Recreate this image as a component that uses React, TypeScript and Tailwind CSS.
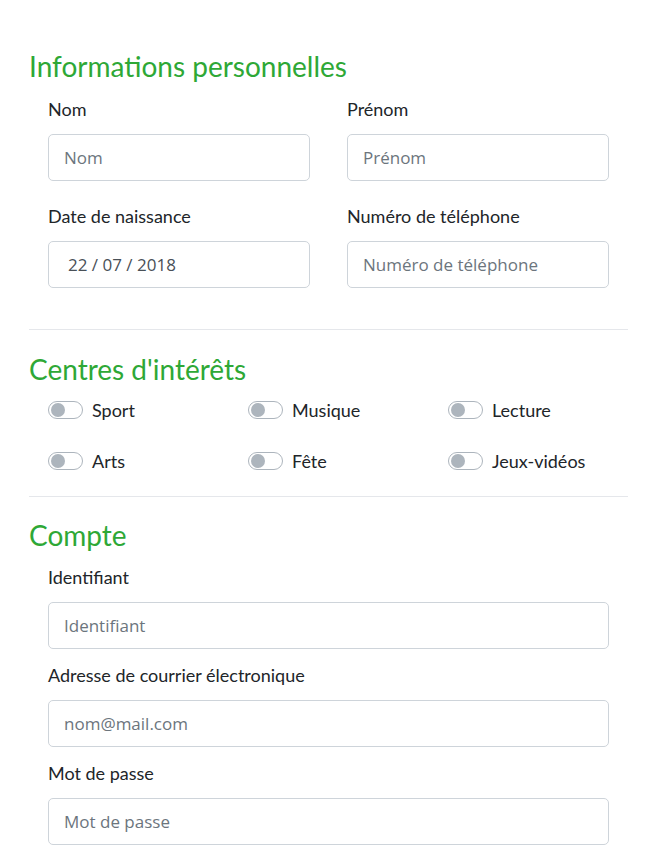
const HEAD = "text-[28px] leading-[32px] text-[#2ea836] font-['Lato','Noto_Sans',sans-serif]";
const LABEL = "block text-[18px] leading-[22px] text-[#212529] font-['Lato','Noto_Sans',sans-serif]";
const INPUT =
  "block w-full h-[47px] rounded-[5px] border border-[#ced4da] bg-white px-[15px] text-[17px] text-[#495057] placeholder:text-[#6c757d] font-['Open_Sans','Noto_Sans',sans-serif] outline-none";

function Field({ label, placeholder, value }: { label: string; placeholder: string; value?: string }) {
  return (
    <div className="flex flex-col gap-[14px]">
      <label className={LABEL}>{label}</label>
      {value ? (
        <div className={`${INPUT} flex items-center pl-[19px]`}>{value}</div>
      ) : (
        <input className={INPUT} placeholder={placeholder} />
      )}
    </div>
  );
}

function Toggle({ label }: { label: string }) {
  return (
    <div className="flex items-center gap-[9px]">
      <span className="flex h-[18px] w-[35px] items-center rounded-full border border-[#adb5bd] bg-white px-[2px]">
        <span className="h-[14px] w-[14px] rounded-full bg-[#adb5bd]" />
      </span>
      <span className={LABEL}>{label}</span>
    </div>
  );
}

export default function App() {
  const interests = ["Sport", "Musique", "Lecture", "Arts", "Fête", "Jeux-vidéos"];
  return (
    <div className="min-h-screen bg-white px-[29px] pt-[50px] pb-[20px]">
      <div className="w-[599px]">
        <h2 className={HEAD}>Informations personnelles</h2>
        <div className="mt-[16px] px-[19px] grid grid-cols-2 gap-x-[37px] gap-y-[24px]">
          <Field label="Nom" placeholder="Nom" />
          <Field label="Prénom" placeholder="Prénom" />
          <Field label="Date de naissance" placeholder="" value="22 / 07 / 2018" />
          <Field label="Numéro de téléphone" placeholder="Numéro de téléphone" />
        </div>
        <hr className="mt-[41px] border-t border-[#e5e7eb]" />

        <h2 className={`${HEAD} mt-[23px]`}>Centres d'intérêts</h2>
        <div className="mt-[14px] pl-[19px] grid grid-cols-[200px_200px_1fr] gap-y-[29px]">
          {interests.map((i) => (
            <Toggle key={i} label={i} />
          ))}
        </div>
        <hr className="mt-[24px] border-t border-[#e5e7eb]" />

        <h2 className={`${HEAD} mt-[22px]`}>Compte</h2>
        <div className="mt-[15px] px-[19px] flex flex-col gap-[15px]">
          <Field label="Identifiant" placeholder="Identifiant" />
          <Field label="Adresse de courrier électronique" placeholder="nom@mail.com" />
          <Field label="Mot de passe" placeholder="Mot de passe" />
        </div>
      </div>
    </div>
  );
}
